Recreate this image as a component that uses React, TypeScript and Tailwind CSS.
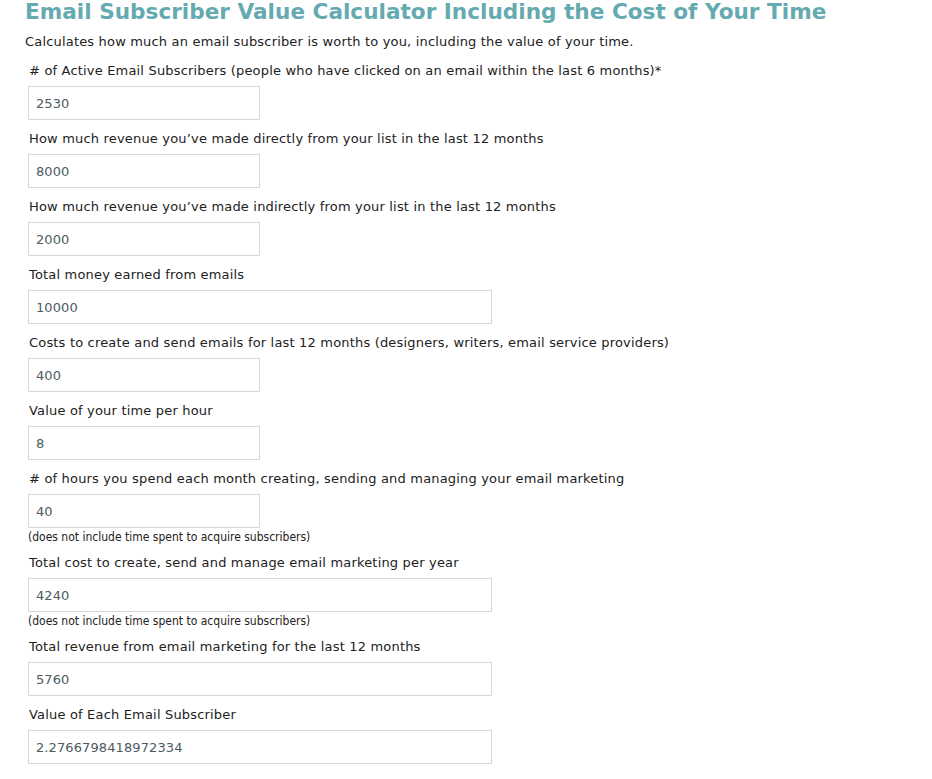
import React from "react";

interface Field {
  label: string;
  value: string;
  wide?: boolean;
  note?: string;
}

const fields: Field[] = [
  {
    label:
      "# of Active Email Subscribers (people who have clicked on an email within the last 6 months)*",
    value: "2530",
  },
  {
    label: "How much revenue you\u2019ve made directly from your list in the last 12 months",
    value: "8000",
  },
  {
    label: "How much revenue you\u2019ve made indirectly from your list in the last 12 months",
    value: "2000",
  },
  { label: "Total money earned from emails", value: "10000", wide: true },
  {
    label:
      "Costs to create and send emails for last 12 months (designers, writers, email service providers)",
    value: "400",
  },
  { label: "Value of your time per hour", value: "8" },
  {
    label: "# of hours you spend each month creating, sending and managing your email marketing",
    value: "40",
    note: "(does not include time spent to acquire subscribers)",
  },
  {
    label: "Total cost to create, send and manage email marketing per year",
    value: "4240",
    wide: true,
    note: "(does not include time spent to acquire subscribers)",
  },
  { label: "Total revenue from email marketing for the last 12 months", value: "5760", wide: true },
  { label: "Value of Each Email Subscriber", value: "2.2766798418972334", wide: true },
];

const App = () => {
  return (
    <div className="min-h-screen bg-white pl-[25px] text-[#222] font-['Verdana','DejaVu_Sans',sans-serif]">
      <h1 className="text-[21.6px] font-bold leading-[24px] text-[#64aab0]">
        Email Subscriber Value Calculator Including the Cost of Your Time
      </h1>
      <p className="mt-[8px] text-[13px] tracking-[0.18px] leading-[20px]">
        Calculates how much an email subscriber is worth to you, including the value of your time.
      </p>
      <div className="mt-[9px] pl-[3px] flex flex-col">
        {fields.map((f, i) => (
          <div key={i} className="flex flex-col">
            <label className="pl-px text-[13px] tracking-[0.18px] leading-[20px]">{f.label}</label>
            <input
              readOnly
              value={f.value}
              className={`mt-[5px] h-[34px] border border-[#d8d8d8] px-[7px] text-[13px] tracking-[0.1px] text-[#4d5b61] outline-none ${
                f.wide ? "w-[464px]" : "w-[232px]"
              }`}
            />
            {f.note ? (
              <span className="text-[12px] leading-[18px] text-[#222] font-['Tahoma','DejaVu_Sans_Condensed',sans-serif]">
                {f.note}
              </span>
            ) : null}
            <div className={f.note ? "h-[7px]" : "h-[9px]"} />
          </div>
        ))}
      </div>
    </div>
  );
};

export default App;
